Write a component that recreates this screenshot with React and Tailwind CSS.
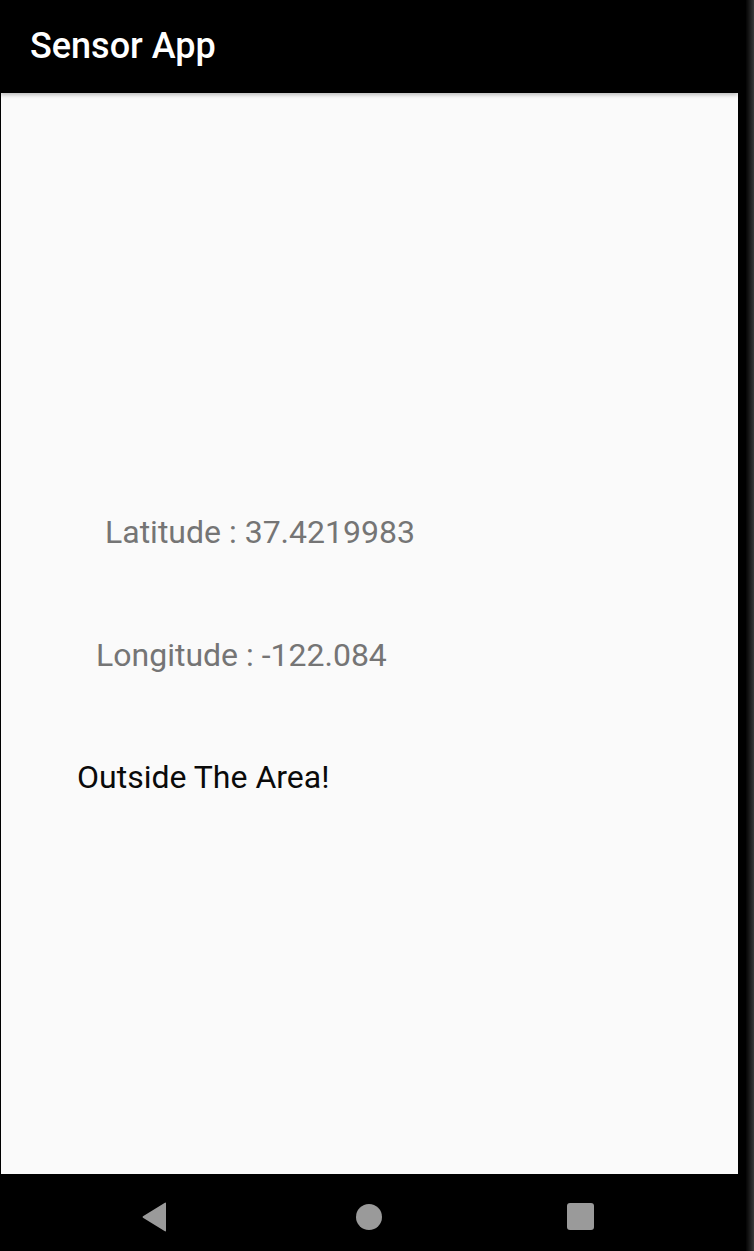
export default function App() {
  return (
    <div className="flex h-[1251px] w-[754px] bg-black" style={{ fontFamily: "Roboto, 'Noto Sans', sans-serif" }}>
      <div className="flex w-[738px] flex-col">
        <header className="relative z-10 flex h-[93px] items-center bg-black pl-[30px] shadow-[0_2px_4px_rgba(0,0,0,0.25)]">
          <h1 className="pb-[2px] text-[36px] font-medium leading-none text-white">Sensor App</h1>
        </header>
        <main className="flex flex-1 flex-col border-l border-black bg-[#fafafa]">
          <p className="ml-[104px] mt-[420px] text-[32px] leading-[38px] text-[#757575]">Latitude : 37.4219983</p>
          <p className="ml-[95px] mt-[85px] text-[32px] leading-[38px] text-[#757575]">Longitude : -122.084</p>
          <p className="ml-[76px] mt-[84px] text-[32px] leading-[38px] text-[#0a0a0a]">Outside The Area!</p>
        </main>
        <nav className="flex h-[77px] items-center bg-black pt-[8px]">
          <div className="flex w-full items-center">
            <svg className="ml-[141px]" width="27" height="30" viewBox="0 0 27 30">
              <path d="M25 1.5 L25 28.5 Q25 30 23.5 29 L2 15.8 Q1 15 2 14.2 L23.5 1 Q25 0 25 1.5 Z" fill="#9a9a9a" />
            </svg>
            <div className="ml-[188px] h-[26px] w-[26px] rounded-full bg-[#9a9a9a]" />
            <div className="ml-[185px] h-[27px] w-[27px] rounded-[3px] bg-[#9a9a9a]" />
          </div>
        </nav>
      </div>
      <div className="flex w-[16px]">
        <div className="w-[8px] bg-black" />
        <div className="w-[8px] bg-gradient-to-r from-[#050505] to-[#3a3a3a]" />
      </div>
    </div>
  );
}
